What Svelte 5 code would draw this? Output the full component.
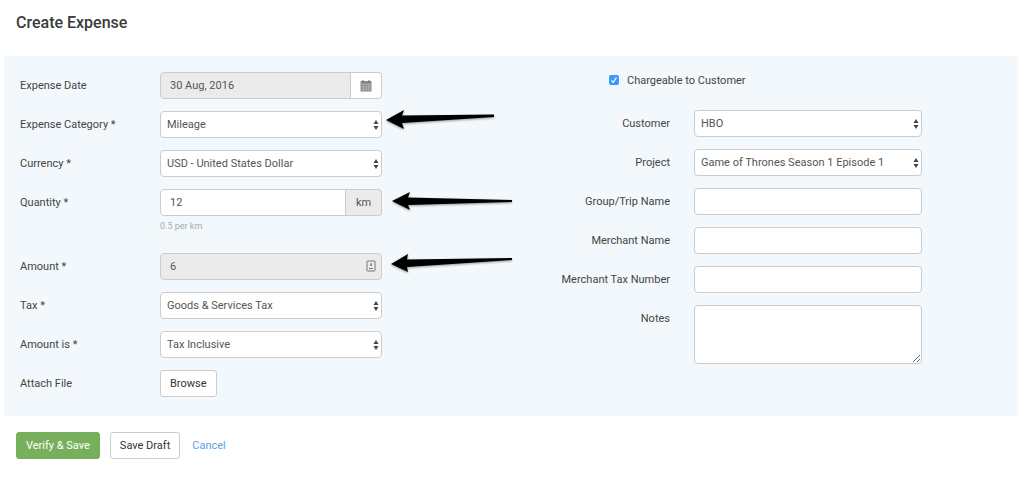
<script lang="ts">
  type Field = { id: string; label: string; value: string };

  const merchantFields: Field[] = [
    { id: 'trip', label: 'Group/Trip Name', value: '' },
    { id: 'merchant', label: 'Merchant Name', value: '' },
    { id: 'tax-number', label: 'Merchant Tax Number', value: '' },
  ];

  let expenseDate = $state('30 Aug, 2016');
  let quantity = $state('12');
  let chargeable = $state(true);
  let notes = $state('');

  const rate = 0.5;
  const amount = $derived(Number(quantity) * rate);
</script>

{#snippet select(id: string, option: string)}
  <div class="select-wrap">
    <select {id} class="control">
      <option>{option}</option>
    </select>
    <svg class="caret" viewBox="0 0 6 10" aria-hidden="true">
      <path d="M3 0 L5.5 4 H0.5 Z M3 10 L5.5 6 H0.5 Z" />
    </svg>
  </div>
{/snippet}

{#snippet arrow(path: string)}
  <svg class="arrow" viewBox="0 0 136 24" aria-hidden="true">
    <path d={path} />
  </svg>
{/snippet}

<main>
  <h1>Create Expense</h1>

  <form id="expense" class="panel">
    <div class="column left">
      <div class="row">
        <label for="date">Expense Date</label>
        <div class="group">
          <input id="date" class="control" bind:value={expenseDate} readonly />
          <button type="button" class="addon calendar" aria-label="Pick a date">
            <svg viewBox="0 0 12 12" aria-hidden="true">
              <path class="sheet" d="M0.5 1 H11.5 V11.5 H0.5 Z" />
              <path class="lines" d="M0.5 4.2 H11.5 M0.5 6.8 H11.5 M0.5 9.2 H11.5 M3.2 4.2 V11.5 M6 4.2 V11.5 M8.8 4.2 V11.5" />
              <path class="rings" d="M3 0 V2.5 M9 0 V2.5" />
            </svg>
          </button>
        </div>
      </div>

      <div class="row">
        <label for="category">Expense Category *</label>
        <div class="field">
          {@render select('category', 'Mileage')}
          {@render arrow('M4 11 L22 1 L20 6.5 L112 5.5 V8 L20 14 L22 20 Z')}
        </div>
      </div>

      <div class="row">
        <label for="currency">Currency *</label>
        {@render select('currency', 'USD - United States Dollar')}
      </div>

      <div class="row quantity">
        <label for="quantity">Quantity *</label>
        <div class="field">
          <div class="group">
            <input id="quantity" class="control" bind:value={quantity} />
            <span class="addon unit">km</span>
          </div>
          {@render arrow('M10 14 L28 5 L26 10.5 L130 13 V15 L26 18 L28 23 Z')}
          <p class="hint">{rate} per km</p>
        </div>
      </div>

      <div class="row">
        <label for="amount">Amount *</label>
        <div class="field">
          <input id="amount" class="control" value={amount} readonly />
          <svg class="card-icon" viewBox="0 0 10 12" aria-hidden="true">
            <rect x="1" y="1" width="8" height="10" rx="0.5" />
            <path d="M5 3 V6 M4 5 H6 M3 8.5 H7" />
          </svg>
          {@render arrow('M9 13 L26 3 L25 8.5 L130 7 V9 L25 16 L26 21 Z')}
        </div>
      </div>

      <div class="row">
        <label for="tax">Tax *</label>
        {@render select('tax', 'Goods & Services Tax')}
      </div>

      <div class="row">
        <label for="amount-is">Amount is *</label>
        {@render select('amount-is', 'Tax Inclusive')}
      </div>

      <div class="row">
        <label for="browse">Attach File</label>
        <div>
          <button id="browse" type="button" class="btn">Browse</button>
        </div>
      </div>
    </div>

    <div class="column right">
      <label class="check">
        <input type="checkbox" bind:checked={chargeable} />
        <svg viewBox="0 0 10 10" aria-hidden="true"><path d="M2.5 5.5 L4.2 7.3 L7.5 2.5" /></svg>
        Chargeable to Customer
      </label>

      <div class="row">
        <label for="customer">Customer</label>
        {@render select('customer', 'HBO')}
      </div>
      <div class="row">
        <label for="project">Project</label>
        {@render select('project', 'Game of Thrones Season 1 Episode 1')}
      </div>
      {#each merchantFields as field (field.id)}
        <div class="row">
          <label for={field.id}>{field.label}</label>
          <input id={field.id} class="control" value={field.value} />
        </div>
      {/each}
      <div class="row">
        <label for="notes">Notes</label>
        <textarea id="notes" class="control" bind:value={notes}></textarea>
      </div>
    </div>
  </form>

  <div class="actions">
    <button type="submit" form="expense" class="btn primary">Verify &amp; Save</button>
    <button type="button" class="btn">Save Draft</button>
    <a href="#cancel">Cancel</a>
  </div>
</main>

<style>
  :global(body) {
    background: #fff;
  }

  main,
  button,
  input,
  select,
  textarea {
    font-family: Roboto, 'Liberation Sans', sans-serif;
    font-size: 11px;
    line-height: 15px;
    color: #444;
  }

  main {
    padding: 12px 6px 0 4px;
  }

  h1 {
    margin: 0 12px 22px;
    font-size: 16px;
    line-height: 22px;
    font-weight: 500;
    color: #3a3a3a;
  }

  .panel {
    display: grid;
    grid-template-columns: 1fr 1fr;
    padding: 16px 0 19px;
    background: #f2f8fb;
  }

  .column {
    display: flex;
    flex-direction: column;
    gap: 12px;
  }

  .left {
    padding: 0 129px 0 16px;
  }

  .right {
    padding-right: 96px;
  }

  .row {
    display: grid;
    grid-template-columns: 140px minmax(0, 1fr);
    align-items: start;
  }

  .row label {
    padding: 6px 0;
  }

  .right .row {
    grid-template-columns: 159px minmax(0, 1fr);
    column-gap: 24px;
  }

  .right .row label {
    text-align: right;
  }

  .quantity {
    margin-bottom: 8px;
  }

  .control {
    box-sizing: border-box;
    display: block;
    width: 100%;
    height: 27px;
    margin: 0;
    padding: 0 9px;
    border: 1px solid #ccc;
    border-radius: 4px;
    outline: none;
    background: #fff;
    color: #555;
  }

  .control[readonly] {
    background: #ebebeb;
  }

  select.control {
    padding: 0 6px;
    appearance: none;
  }

  textarea.control {
    height: 59px;
    resize: both;
  }

  .field,
  .select-wrap {
    position: relative;
  }

  .caret {
    position: absolute;
    top: 9px;
    right: 3px;
    width: 6px;
    height: 10px;
    fill: #444;
    pointer-events: none;
  }

  .group {
    display: flex;
  }

  .group .control {
    flex: 1;
    min-width: 0;
    border-radius: 4px 0 0 4px;
  }

  .addon {
    box-sizing: border-box;
    display: flex;
    align-items: center;
    justify-content: center;
    height: 27px;
    padding: 0 9px;
    border: 1px solid #ccc;
    border-left: 0;
    border-radius: 0 4px 4px 0;
    color: #555;
  }

  .unit {
    width: 36px;
    background: #ebebeb;
  }

  .calendar {
    width: 31px;
    background: #fff;
  }

  .calendar svg {
    flex: none;
    width: 12px;
    height: 12px;
  }

  .sheet {
    fill: #8a8a8a;
  }

  .lines {
    fill: none;
    stroke: #c4c4c4;
    stroke-width: 0.6;
  }

  .rings {
    stroke: #666;
  }

  .hint {
    margin: 3px 0 0;
    font-size: 9px;
    line-height: 14px;
    color: #aaa;
  }

  .card-icon {
    position: absolute;
    top: 7px;
    right: 6px;
    width: 10px;
    height: 12px;
    fill: none;
    stroke: #777;
  }

  .arrow {
    position: absolute;
    top: -2px;
    left: 100%;
    width: 136px;
    height: 24px;
    overflow: visible;
    fill: #000;
    filter: drop-shadow(0 1px 1px #0006);
    pointer-events: none;
  }

  .check {
    display: flex;
    align-items: center;
    height: 16px;
    margin: 0 0 10px 98px;
  }

  .check input {
    width: 10px;
    height: 10px;
    margin: 0 8px 0 0;
    border-radius: 2px;
    background: #fff;
    appearance: none;
    outline: 1px solid #ccc;
    outline-offset: -1px;
  }

  .check input:checked {
    background: #3b99fc;
    outline: none;
  }

  .check svg {
    width: 10px;
    height: 10px;
    margin: 0 8px 0 -18px;
    fill: none;
    stroke: #fff;
    stroke-width: 1.3;
    pointer-events: none;
  }

  .btn {
    height: 27px;
    padding: 0 9px;
    border: 1px solid #ccc;
    border-radius: 3px;
    background: #fff;
    color: #333;
    cursor: pointer;
  }

  .primary {
    border-color: #77b05d;
    background: #77b05d;
    color: #fff;
  }

  .actions {
    display: flex;
    align-items: center;
    gap: 10px;
    padding: 16px 12px;
  }

  .actions a {
    margin-left: 2px;
    color: #5ba4e0;
    text-decoration: none;
  }
</style>
